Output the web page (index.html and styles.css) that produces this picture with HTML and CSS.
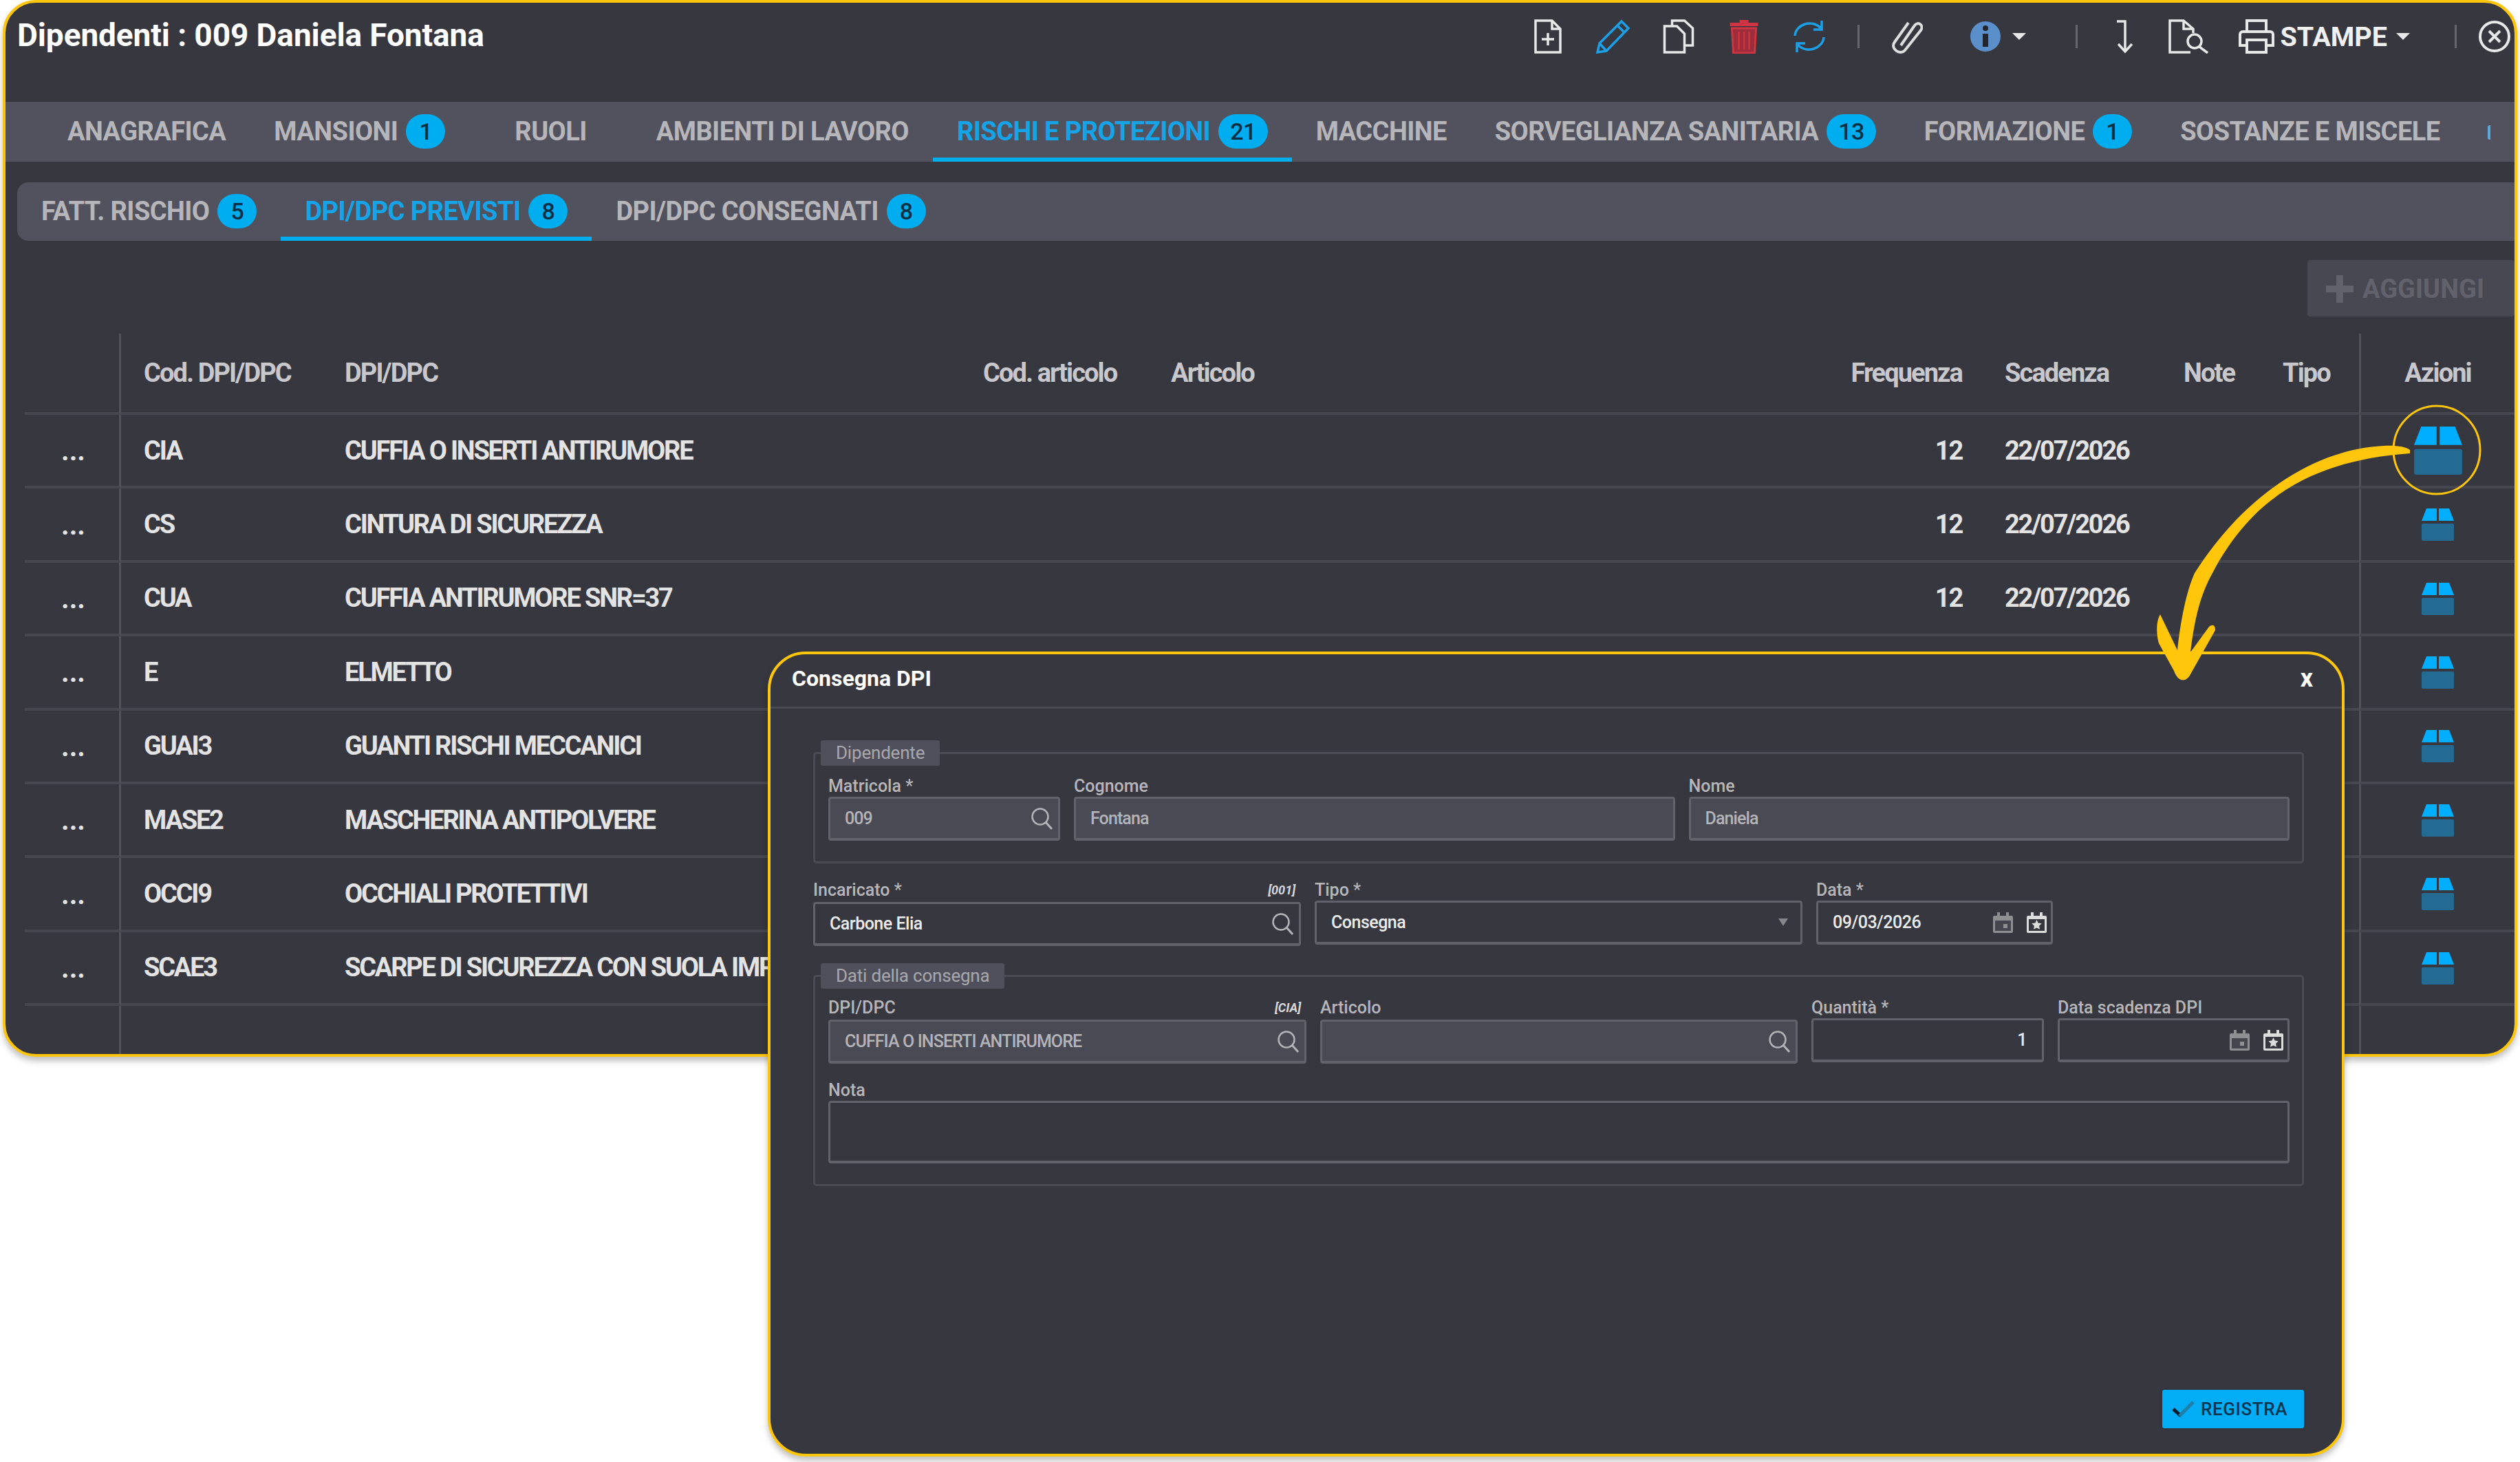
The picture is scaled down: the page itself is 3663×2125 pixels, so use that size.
FILE: index.html
```html
<!DOCTYPE html>
<html lang="it">
<head>
    <meta charset="UTF-8">
    <title>Dipendenti : 009 Daniela Fontana</title>
    <link rel="stylesheet" href="styles.css">
</head>
<body>
    <svg class="sprites" width="0" height="0">
        <symbol id="box" viewBox="0 0 47 47">
            <path d="M7 0h15v18H0z" fill="#00aeff"/>
            <path d="M25 0h15l7 18H25z" fill="#00aeff"/>
            <rect x="0" y="22" width="47" height="25" rx="2" fill="#236b93"/>
        </symbol>
        <symbol id="search" viewBox="0 0 33 33">
            <circle cx="14" cy="14" r="11.5" fill="none" stroke="#b4b4b8" stroke-width="2.5"/>
            <path d="M22 22l9 10" stroke="#b4b4b8" stroke-width="3" fill="none"/>
        </symbol>
        <symbol id="cal-day" viewBox="0 0 29 32">
            <path d="M2 6h25a2 2 0 0 1 2 2v21a2 2 0 0 1-2 2H2a2 2 0 0 1-2-2V8a2 2 0 0 1 2-2z" fill="#8f8f92"/>
            <rect x="6" y="1" width="4" height="7" fill="#8f8f92"/>
            <rect x="19" y="1" width="4" height="7" fill="#8f8f92"/>
            <rect x="3" y="13" width="23" height="15" fill="#45454e"/>
            <rect x="15" y="18" width="6" height="6" fill="#8f8f92"/>
        </symbol>
        <symbol id="cal-star" viewBox="0 0 29 32">
            <path d="M2 6h25a2 2 0 0 1 2 2v21a2 2 0 0 1-2 2H2a2 2 0 0 1-2-2V8a2 2 0 0 1 2-2z" fill="#dcdcdc"/>
            <rect x="6" y="1" width="4" height="7" fill="#dcdcdc"/>
            <rect x="19" y="1" width="4" height="7" fill="#dcdcdc"/>
            <rect x="3" y="11" width="23" height="17" fill="#37373f"/>
            <path d="M14.500 12l2.200 4.600 5 .7-3.600 3.500.9 5-4.500-2.400-4.500 2.400.9-5-3.600-3.500 5-.7z" fill="#dcdcdc"/>
        </symbol>
    </svg>

    <div class="window">
        <div class="titlebar">
            <h1 class="title">Dipendenti : 009 Daniela Fontana</h1>
            <div class="toolbar">
                <svg class="tool" viewBox="0 0 40 50" fill="none" stroke="#e8e8e8" stroke-width="3.500">
                    <path d="M2 2h24l12 12v34H2z"/><path d="M26 2v12h12"/><path d="M20 20v18M11 29h18"/>
                </svg>
                <svg class="tool" viewBox="0 0 50 50" fill="none" stroke="#1c9fe4" stroke-width="3.500">
                    <path d="M37 3l10 10L15 46 2 48l3-13z"/><path d="M31 9l10 10M5 35l10 11"/>
                </svg>
                <svg class="tool" viewBox="0 0 47 50" fill="none" stroke="#e8e8e8" stroke-width="3.500">
                    <path d="M14 9V2h18l12 11v25H32"/><path d="M3 10h18l11 11v27H3z"/>
                </svg>
                <svg class="tool" viewBox="0 0 43 50">
                    <path d="M15 5V1h13v4h14v5H1V5z" fill="#d03442"/>
                    <path d="M4 13h35l-2 36H6z" fill="#9c2d39" stroke="#d03442" stroke-width="3"/>
                    <path d="M14 18v26M21.500 18v26M29 18v26" stroke="#d03442" stroke-width="2.500"/>
                </svg>
                <svg class="tool" viewBox="0 0 50 50" fill="none" stroke="#1c9fe4" stroke-width="3.500">
                    <path d="M4 24C5 8 28-1 42 13"/><path d="M43 2v13H31"/>
                    <path d="M46 26C45 42 22 51 8 37"/><path d="M7 48V35h12"/>
                </svg>
                <span class="tool-sep"></span>
                <svg class="tool" viewBox="0 0 50 50" fill="none" stroke="#dedede" stroke-width="4">
                    <path d="M18 38L38 9c5-7 14 0 9 7L24 45c-7 8-22-2-15-12L29 5"/>
                </svg>
                <svg class="tool tool-info" viewBox="0 0 46 46">
                    <circle cx="23" cy="23" r="22" fill="#5a8fca"/>
                    <circle cx="23" cy="11" r="4" fill="#24242c"/>
                    <rect x="19" y="19" width="8" height="19" fill="#24242c"/>
                </svg>
                <span class="caret caret-info"></span>
                <span class="tool-sep tool-sep-wide"></span>
                <svg class="tool tool-down" viewBox="0 0 28 50" fill="none" stroke="#e8e8e8" stroke-width="3.500">
                    <path d="M3 3h12v42"/><path d="M5 36l10 11 10-11"/>
                </svg>
                <svg class="tool tool-preview" viewBox="0 0 60 50" fill="none" stroke="#e8e8e8" stroke-width="3.500">
                    <path d="M32 48H2V2h20l14 12v6"/><path d="M22 2v12h14"/>
                    <circle cx="38" cy="32" r="10"/><path d="M45 40l12 9"/>
                </svg>
                <button class="print-btn" type="button">
                    <svg class="print-icon" viewBox="0 0 52 50" fill="none" stroke="#e8e8e8" stroke-width="4">
                        <path d="M12 18V2h28v16"/><path d="M12 38H2V22a4 4 0 0 1 4-4h40a4 4 0 0 1 4 4v16H40"/>
                        <path d="M12 30h28v18H12z"/>
                    </svg>
                    <span>STAMPE</span>
                    <span class="caret"></span>
                </button>
                <span class="tool-sep tool-sep-last"></span>
                <svg class="tool tool-close" viewBox="0 0 48 48" fill="none" stroke="#e8e8e8" stroke-width="4">
                    <circle cx="24" cy="24" r="21"/><path d="M16 16l16 16M32 16L16 32"/>
                </svg>
            </div>
        </div>

        <nav class="tabs">
            <a class="tab">ANAGRAFICA</a>
            <a class="tab">MANSIONI <span class="badge">1</span></a>
            <a class="tab tab-wide">RUOLI</a>
            <a class="tab">AMBIENTI DI LAVORO</a>
            <a class="tab active">RISCHI E PROTEZIONI <span class="badge">21</span></a>
            <a class="tab">MACCHINE</a>
            <a class="tab">SORVEGLIANZA SANITARIA <span class="badge">13</span></a>
            <a class="tab">FORMAZIONE <span class="badge">1</span></a>
            <a class="tab">SOSTANZE E MISCELE</a>
            <span class="tab-more"></span>
        </nav>

        <nav class="subtabs">
            <a class="tab">FATT. RISCHIO <span class="badge">5</span></a>
            <a class="tab active">DPI/DPC PREVISTI <span class="badge">8</span></a>
            <a class="tab">DPI/DPC CONSEGNATI <span class="badge">8</span></a>
        </nav>

        <div class="actions">
            <button class="add-btn" type="button"><span class="add-plus"></span>AGGIUNGI</button>
        </div>

        <table class="grid">
            <colgroup>
                <col class="c-menu"><col class="c-cod"><col class="c-name"><col class="c-art-cod">
                <col class="c-art"><col class="c-freq"><col class="c-date"><col class="c-note">
                <col class="c-tipo"><col class="c-act">
            </colgroup>
            <thead>
                <tr>
                    <th></th><th>Cod. DPI/DPC</th><th>DPI/DPC</th><th>Cod. articolo</th><th>Articolo</th>
                    <th class="num">Frequenza</th><th>Scadenza</th><th>Note</th><th>Tipo</th><th class="act">Azioni</th>
                </tr>
            </thead>
            <tbody>
                <tr>
                    <td class="dots">...</td><td>CIA</td><td>CUFFIA O INSERTI ANTIRUMORE</td><td></td><td></td>
                    <td class="num">12</td><td>22/07/2026</td><td></td><td></td>
                    <td class="act"><svg class="box box-big"><use href="#box"/></svg></td>
                </tr>
                <tr>
                    <td class="dots">...</td><td>CS</td><td>CINTURA DI SICUREZZA</td><td></td><td></td>
                    <td class="num">12</td><td>22/07/2026</td><td></td><td></td>
                    <td class="act"><svg class="box"><use href="#box"/></svg></td>
                </tr>
                <tr>
                    <td class="dots">...</td><td>CUA</td><td>CUFFIA ANTIRUMORE SNR=37</td><td></td><td></td>
                    <td class="num">12</td><td>22/07/2026</td><td></td><td></td>
                    <td class="act"><svg class="box"><use href="#box"/></svg></td>
                </tr>
                <tr>
                    <td class="dots">...</td><td>E</td><td>ELMETTO</td><td></td><td></td><td></td><td></td><td></td><td></td>
                    <td class="act"><svg class="box"><use href="#box"/></svg></td>
                </tr>
                <tr>
                    <td class="dots">...</td><td>GUAI3</td><td>GUANTI RISCHI MECCANICI</td><td></td><td></td><td></td><td></td><td></td><td></td>
                    <td class="act"><svg class="box"><use href="#box"/></svg></td>
                </tr>
                <tr>
                    <td class="dots">...</td><td>MASE2</td><td>MASCHERINA ANTIPOLVERE</td><td></td><td></td><td></td><td></td><td></td><td></td>
                    <td class="act"><svg class="box"><use href="#box"/></svg></td>
                </tr>
                <tr>
                    <td class="dots">...</td><td>OCCI9</td><td>OCCHIALI PROTETTIVI</td><td></td><td></td><td></td><td></td><td></td><td></td>
                    <td class="act"><svg class="box"><use href="#box"/></svg></td>
                </tr>
                <tr>
                    <td class="dots">...</td><td>SCAE3</td><td>SCARPE DI SICUREZZA CON SUOLA IMP</td><td></td><td></td><td></td><td></td><td></td><td></td>
                    <td class="act"><svg class="box"><use href="#box"/></svg></td>
                </tr>
                <tr class="filler"><td></td><td></td><td></td><td></td><td></td><td></td><td></td><td></td><td></td><td></td></tr>
            </tbody>
        </table>
    </div>

    <!-- Dialog opened from the row action -->
    <div class="modal">
        <div class="modal-head">
            <h2>Consegna DPI</h2>
            <span class="modal-close">x</span>
        </div>
        <div class="modal-body">
            <fieldset>
                <legend>Dipendente</legend>
                <div class="row row-dip">
                    <div class="field">
                        <label>Matricola *</label>
                        <div class="input filled">009<svg class="search"><use href="#search"/></svg></div>
                    </div>
                    <div class="field">
                        <label>Cognome</label>
                        <div class="input filled">Fontana</div>
                    </div>
                    <div class="field">
                        <label>Nome</label>
                        <div class="input filled">Daniela</div>
                    </div>
                </div>
            </fieldset>

            <div class="row row-main">
                <div class="field">
                    <label>Incaricato * <em class="code">[001]</em></label>
                    <div class="input bright">Carbone Elia<svg class="search"><use href="#search"/></svg></div>
                </div>
                <div class="field raised">
                    <label>Tipo *</label>
                    <div class="input bright">Consegna<span class="select-arrow"></span></div>
                </div>
                <div class="field raised">
                    <label>Data *</label>
                    <div class="input bright">09/03/2026
                        <span class="cal-icons">
                            <svg class="cal"><use href="#cal-day"/></svg>
                            <svg class="cal"><use href="#cal-star"/></svg>
                        </span>
                    </div>
                </div>
            </div>

            <fieldset>
                <legend>Dati della consegna</legend>
                <div class="row row-dati">
                    <div class="field">
                        <label>DPI/DPC <em class="code">[CIA]</em></label>
                        <div class="input filled">CUFFIA O INSERTI ANTIRUMORE<svg class="search"><use href="#search"/></svg></div>
                    </div>
                    <div class="field">
                        <label>Articolo</label>
                        <div class="input filled"><svg class="search"><use href="#search"/></svg></div>
                    </div>
                    <div class="field raised">
                        <label>Quantità *</label>
                        <div class="input bright qty">1</div>
                    </div>
                    <div class="field raised">
                        <label>Data scadenza DPI</label>
                        <div class="input">
                            <span class="cal-icons">
                                <svg class="cal"><use href="#cal-day"/></svg>
                                <svg class="cal"><use href="#cal-star"/></svg>
                            </span>
                        </div>
                    </div>
                </div>
                <div class="field nota">
                    <label>Nota</label>
                    <div class="input textarea"></div>
                </div>
            </fieldset>
        </div>
        <div class="modal-foot">
            <button class="save-btn" type="button">
                <svg class="check" viewBox="0 0 32 24">
                    <path d="M1 12l11 10" stroke="#071b28" stroke-width="5" fill="none"/>
                    <path d="M10 22L30 2" stroke="#1f7ea6" stroke-width="5" fill="none"/>
                </svg>
                REGISTRA
            </button>
        </div>
    </div>

    <!-- Yellow callout drawn over the screenshot -->
    <svg class="callout" viewBox="0 0 3663 2125">
        <ellipse cx="3542" cy="654" rx="63" ry="64" fill="none" stroke="#ffc60b" stroke-width="3"/>
        <path fill="#ffc60b" d="M3503 654 C3497 649 3482 647 3465 648 C3370 652 3265 715 3190 833 C3178 860 3170 900 3165 945 L3140 893 C3133 905 3135 925 3138 935 L3160 975 C3166 992 3178 992 3184 980 L3220 916 C3220 908 3216 907 3211 911 L3184 948 C3190 900 3198 865 3216 833 C3280 710 3380 668 3503 659 Z"/>
    </svg>
</body>
</html>
```

FILE: styles.css
```css
* {
    box-sizing: border-box;
}
body {
    margin: 0;
    width: 3663px;
    height: 2125px;
    position: relative;
    overflow: hidden;
    background: #ffffff;
    font-family: 'Roboto', sans-serif;
    color: #e3e3e3;
}
.sprites {
    position: absolute;
}

/* main window */
.window {
    width: 3655px;
    height: 1536px;
    margin-left: 4px;
    background: #373740;
    border: 4px solid #ffc60b;
    border-radius: 48px;
    box-shadow: 0 6px 10px rgba(0, 0, 0, 0.25);
    overflow: hidden;
}
.titlebar {
    height: 144px;
    display: flex;
    justify-content: space-between;
    align-items: flex-start;
    padding: 22px 5px 0 17px;
}
.title {
    margin: 0;
    font-size: 46px;
    line-height: 50px;
    font-weight: bold;
    letter-spacing: -0.1px;
    color: #ffffff;
}
.toolbar {
    display: flex;
    align-items: center;
    margin-top: 2px;
}
.tool {
    width: 50px;
    height: 50px;
    margin-left: 45px;
    display: block;
}
.tool-sep {
    width: 3px;
    height: 34px;
    margin-left: 45px;
    background: #66666e;
}
.tool-sep + .tool {
    margin-left: 42px;
}
.tool-info {
    width: 46px;
    height: 46px;
    margin-left: 68px;
}
.caret {
    width: 0;
    height: 0;
    margin-left: 13px;
    border-left: 10px solid transparent;
    border-right: 10px solid transparent;
    border-top: 10px solid #e8e8e8;
}
.caret-info {
    margin-left: 16px;
}
.tool-sep-wide {
    margin-left: 72px;
}
.tool-sep-wide + .tool-down {
    width: 28px;
    margin-left: 54px;
}
.tool-preview {
    width: 60px;
    margin-left: 50px;
}
.print-btn {
    display: flex;
    align-items: center;
    margin-left: 42px;
    padding: 0;
    border: none;
    background: none;
    font-family: inherit;
    font-size: 39.500px;
    font-weight: bold;
    color: #f0f0f0;
}
.print-icon {
    width: 52px;
    height: 50px;
    margin-right: 8px;
}
.tool-sep-last {
    margin-left: 65px;
}
.tool-sep-last + .tool-close {
    width: 48px;
    height: 48px;
    margin-left: 31px;
}

/* tabs */
.tabs, .subtabs {
    display: flex;
    align-items: stretch;
    background: #52525e;
    font-size: 38px;
    font-weight: bold;
    letter-spacing: -0.57px;
    color: #b6b6ba;
}
.tabs {
    height: 87px;
    padding-left: 55px;
}
.subtabs {
    height: 85px;
    margin: 30px 0 0 17px;
    border-radius: 16px 0 0 16px;
}
.tab {
    display: flex;
    align-items: center;
    gap: 12px;
    padding: 5px 35px 0;
    border-bottom: 6px solid transparent;
    white-space: nowrap;
}
.tab-wide {
    padding: 5px 66px 0;
}
.tab.active {
    color: #16a4e8;
    border-bottom-color: #00aeef;
}
.badge {
    min-width: 57px;
    height: 50px;
    padding: 0 17px;
    border-radius: 25px;
    background: #00aeef;
    color: #0b2f45;
    font-size: 34px;
    font-weight: 500;
    line-height: 50px;
    text-align: center;
}
.tab-more {
    width: 4px;
    height: 21px;
    margin: 34px 0 0 34px;
    border-radius: 3px 0 0 3px;
    background: #5fa8d8;
}

/* add button */
.actions {
    display: flex;
    justify-content: flex-end;
    margin-top: 28px;
}
.add-btn {
    width: 301px;
    height: 82px;
    display: flex;
    align-items: center;
    gap: 13px;
    padding: 2px 0 0 27px;
    border: none;
    border-radius: 4px;
    background: #484852;
    font-family: inherit;
    font-size: 38px;
    font-weight: bold;
    color: #62626c;
}
.add-plus {
    width: 40px;
    height: 40px;
    background: linear-gradient(#62626c, #62626c) center / 100% 10px no-repeat,
                linear-gradient(#62626c, #62626c) center / 10px 100% no-repeat;
}

/* table */
.grid {
    width: 3619px;
    margin: 25px 0 0 28px;
    border-collapse: separate;
    border-spacing: 0;
    table-layout: fixed;
    font-size: 38px;
    font-weight: bold;
    letter-spacing: -2.200px;
}
.c-menu { width: 140px; }
.c-cod { width: 292px; }
.c-name { width: 928px; }
.c-art-cod { width: 273px; }
.c-art { width: 931px; }
.c-freq { width: 281px; }
.c-date { width: 260px; }
.c-note { width: 144px; }
.c-tipo { width: 144px; }
.c-act { width: 226px; }
.grid th, .grid td {
    height: 107.400px;
    padding: 0 0 0 33px;
    border-bottom: 4px solid #474751;
    text-align: left;
    white-space: nowrap;
    overflow: hidden;
}
.grid th {
    height: 118px;
    font-weight: bold;
    letter-spacing: -1.900px;
    color: #c8c8cc;
}
.grid td:first-child, .grid th:first-child {
    border-right: 3px solid #52525c;
}
.grid td:last-child, .grid th:last-child {
    border-left: 3px solid #52525c;
}
.grid .num {
    padding: 0 29px 0 0;
    text-align: right;
}
.grid .act {
    padding: 0;
    text-align: center;
}
.grid .dots {
    padding: 2px 0 0 4px;
    text-align: center;
    font-weight: bold;
    font-size: 40px;
    letter-spacing: 0;
}
.grid .filler td {
    height: 73px;
    border-bottom: none;
}
.box {
    width: 47px;
    height: 47px;
    display: inline-block;
    vertical-align: middle;
}
.box-big {
    width: 70px;
    height: 70px;
}

/* modal */
.modal {
    position: absolute;
    left: 1116px;
    top: 947px;
    width: 2292px;
    height: 1170px;
    display: flex;
    flex-direction: column;
    background: #373740;
    border: 4px solid #ffc60b;
    border-radius: 55px;
    box-shadow: 0 6px 10px rgba(0, 0, 0, 0.25);
    font-size: 25px;
    font-weight: 500;
}
.modal-head {
    height: 79px;
    flex-shrink: 0;
    display: flex;
    justify-content: space-between;
    align-items: center;
    padding: 0 42px 6px 31px;
    border-bottom: 3px solid #4a4a54;
}
.modal-head h2 {
    margin: 0;
    font-size: 32px;
    font-weight: bold;
    color: #ffffff;
}
.modal-close {
    font-size: 36px;
    font-weight: bold;
    color: #ffffff;
}
.modal-body {
    padding: 46px 55px 0 62px;
}
fieldset {
    margin: 0;
    padding: 0 18px 30px 19px;
    border: 3px solid #4b4b55;
    border-radius: 5px;
    min-width: 0;
}
legend {
    height: 37px;
    margin-left: -11px;
    padding: 0 22px;
    background: #50505c;
    border-radius: 3px;
    font-size: 26px;
    font-weight: 400;
    line-height: 37px;
    letter-spacing: -0.2px;
    color: #a8a8ac;
}
.row {
    display: grid;
    gap: 20px;
    margin-top: 13px;
}
.row-dip {
    grid-template-columns: 337px 1fr 1fr;
}
.row-main {
    grid-template-columns: 709px 709px 344px;
    margin: 24px 0 25px;
}
.row-dati {
    grid-template-columns: 695px 694px 338px 337px;
}
.field label {
    display: flex;
    justify-content: space-between;
    align-items: center;
    height: 32px;
    color: #b6b6ba;
    white-space: nowrap;
}
.row-main label, .row-dati label {
    padding-bottom: 4px;
}
.field.raised .input {
    margin-top: -2px;
}
.code {
    margin-right: 8px;
    font-size: 18px;
    font-weight: bold;
    color: #d8d8d8;
}
.input {
    height: 64px;
    display: flex;
    align-items: center;
    position: relative;
    padding-left: 21px;
    border: 3px solid #62626c;
    border-bottom-width: 4px;
    border-radius: 4px;
    letter-spacing: -0.5px;
    color: #b4b4b8;
}
.input.filled {
    background: #4a4a55;
    letter-spacing: -0.9px;
}
.input.bright {
    color: #ececec;
}
.input.qty {
    justify-content: flex-end;
    padding-right: 22px;
}
.search {
    width: 33px;
    height: 33px;
    margin-left: auto;
    margin-right: 7px;
}
.select-arrow {
    margin-left: auto;
    margin-right: 18px;
    border-left: 7px solid transparent;
    border-right: 7px solid transparent;
    border-top: 11px solid #85858a;
}
.cal-icons {
    display: flex;
    gap: 20px;
    margin-left: auto;
    margin-right: 6px;
}
.cal {
    width: 29px;
    height: 32px;
    display: block;
}
.nota {
    margin-top: 22px;
}
.input.textarea {
    height: 91px;
}
.modal-foot {
    margin-top: auto;
    display: flex;
    justify-content: flex-end;
    padding: 0 55px 37px 0;
}
.save-btn {
    width: 206px;
    height: 56px;
    display: flex;
    align-items: center;
    gap: 9px;
    padding: 0 0 0 15px;
    border: none;
    border-radius: 3px;
    background: #02adf5;
    box-shadow: 0 0 3px rgba(60, 10, 10, 0.6);
    font-family: 'Roboto', sans-serif;
    font-size: 26px;
    font-weight: 500;
    letter-spacing: 0.6px;
    color: #0a3550;
}
.check {
    width: 32px;
    height: 24px;
}
.callout {
    position: absolute;
    left: 0;
    top: 0;
    width: 3663px;
    height: 2125px;
    pointer-events: none;
}
```
